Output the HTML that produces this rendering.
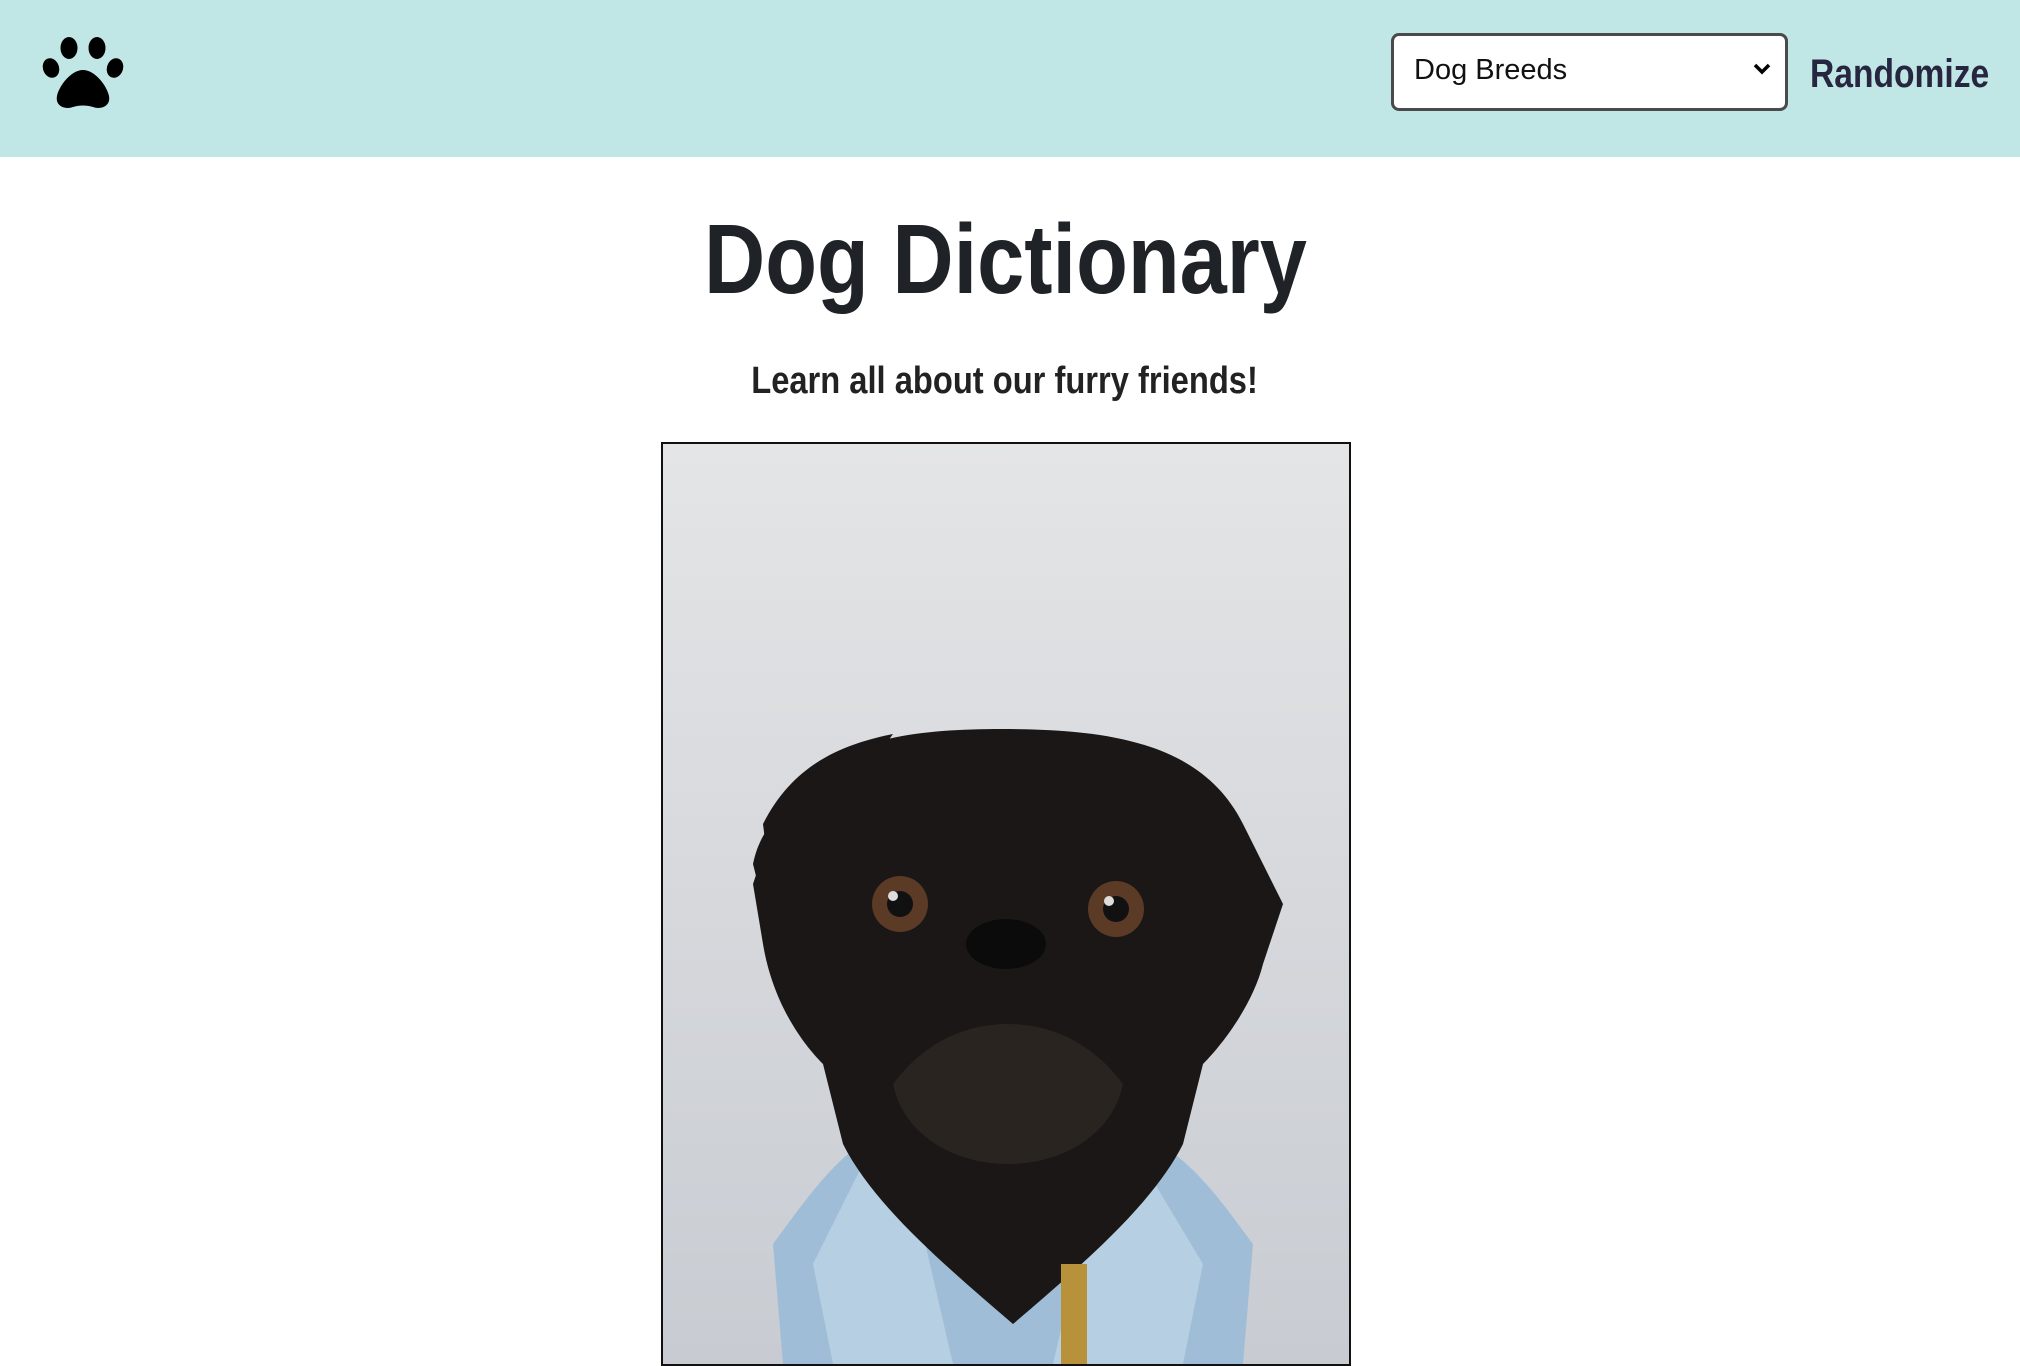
<!DOCTYPE html>
<html><head><style>
body{margin:0;width:2020px;height:1358px;overflow:hidden;background:#fff;font-family:"Liberation Sans",sans-serif;position:relative}
.hdr{position:absolute;left:0;top:0;width:2020px;height:157px;background:#c1e6e6}
.sel{position:absolute;left:1391px;top:33px;width:391px;height:72px;border:3px solid #4a4a4a;border-radius:8px;background:#fff;box-sizing:content-box}
.sel span{position:absolute;left:20px;top:18px;font-size:29px;color:#111}
.rnd{position:absolute;left:1810px;top:52px;font-size:40px;font-weight:bold;color:#262640;transform:scaleX(0.84);transform-origin:left;white-space:nowrap}
h1{position:absolute;left:0;width:2010px;top:210px;margin:0;text-align:center;font-size:98px;color:#1f2226;line-height:1}
h1 span{display:inline-block;transform:scaleX(0.865)}
p span{display:inline-block;transform:scaleX(0.86)}
p{position:absolute;left:0;width:2010px;top:360px;margin:0;text-align:center;font-size:38px;font-weight:bold;color:#222}
.img{position:absolute;left:661px;top:442px;width:686px;height:920px;border:2px solid #111;overflow:hidden;background:linear-gradient(180deg,#e4e5e6,#d6d8dc 50%,#c8ccd2)}
</style></head><body>
<div class="hdr"></div>
<svg style="position:absolute;left:41px;top:36px" width="84" height="74" viewBox="0 0 84 74">
<ellipse cx="10" cy="32" rx="8" ry="10" transform="rotate(-20 10 32)"/>
<ellipse cx="28" cy="12" rx="8.5" ry="11"/>
<ellipse cx="56" cy="12" rx="8.5" ry="11"/>
<ellipse cx="74" cy="32" rx="8" ry="10" transform="rotate(20 74 32)"/>
<path d="M42 34C30 34 18 50 16 60C14 70 24 74 32 71C38 69 46 69 52 71C60 74 70 70 68 60C66 50 54 34 42 34Z"/>
</svg>
<div class="sel"><span>Dog Breeds</span>
<svg style="position:absolute;right:14px;top:26px" width="18" height="14" viewBox="0 0 18 14"><path d="M2 3L9 10L16 3" stroke="#000" stroke-width="3.5" fill="none"/></svg></div>
<div class="rnd">Randomize</div>
<h1><span>Dog Dictionary</span></h1>
<p><span>Learn all about our furry friends!</span></p>
<div class="img">
<svg width="686" height="920" viewBox="0 0 686 920">
<path d="M120 920L110 800C140 760 180 700 220 690L470 690C520 700 560 760 590 800L580 920Z" fill="#9fbdd6"/>
<path d="M200 720L150 820L170 920L290 920L260 790Z" fill="#b6cfe2"/>
<path d="M480 720L540 820L520 920L390 920L420 790Z" fill="#b6cfe2"/>
<path d="M100 380C130 320 180 300 230 290L110 460Z" fill="#1a1716"/>
<path d="M90 420C100 370 140 350 170 350L110 460L100 460Z" fill="#1a1716"/>
<path d="M110 380C150 300 230 285 340 285C450 285 540 300 580 380L620 460L600 520C590 560 560 600 540 620L520 700C490 760 420 820 350 880C280 820 210 760 180 700L160 620C140 600 110 560 100 500L90 440Z" fill="#1a1716"/>
<path d="M230 640C260 600 300 580 345 580C390 580 430 600 460 640C450 690 400 720 345 720C290 720 240 690 230 640Z" fill="#2a2420"/>
<circle cx="237" cy="460" r="28" fill="#5b3a26"/><circle cx="237" cy="460" r="13" fill="#111"/><circle cx="230" cy="452" r="5" fill="#ddd"/>
<circle cx="453" cy="465" r="28" fill="#5b3a26"/><circle cx="453" cy="465" r="13" fill="#111"/><circle cx="446" cy="457" r="5" fill="#ddd"/>
<ellipse cx="343" cy="500" rx="40" ry="25" fill="#0c0b0b"/>
<rect x="398" y="820" width="26" height="100" fill="#b8923a"/>
</svg></div>
</body></html>
